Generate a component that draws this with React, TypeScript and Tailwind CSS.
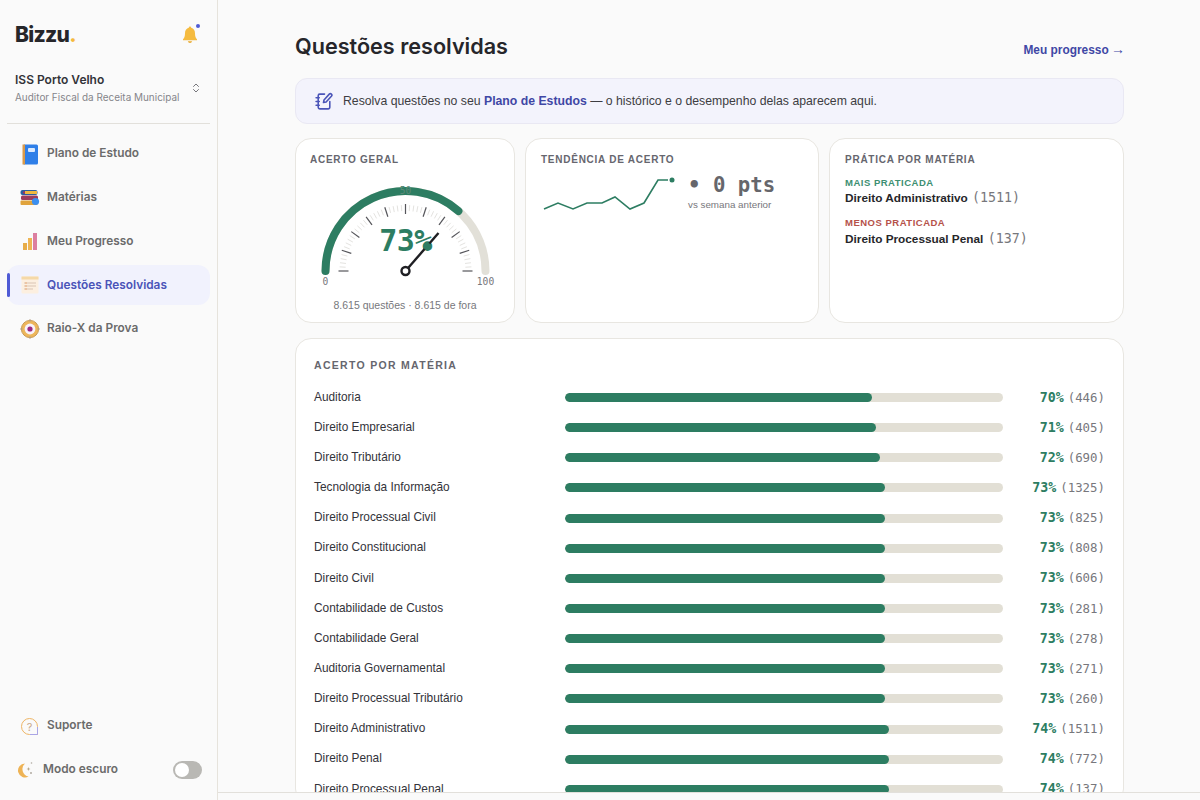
import { ChevronsUpDown } from "lucide-react";

const sans = "font-['Inter',sans-serif]";
const arial = "font-['Liberation_Sans',Arial,sans-serif]";
const mono = "font-['DejaVu_Sans_Mono',monospace]";

const rows: [string, number, number][] = [
  ["Auditoria", 70, 446],
  ["Direito Empresarial", 71, 405],
  ["Direito Tributário", 72, 690],
  ["Tecnologia da Informação", 73, 1325],
  ["Direito Processual Civil", 73, 825],
  ["Direito Constitucional", 73, 808],
  ["Direito Civil", 73, 606],
  ["Contabilidade de Custos", 73, 281],
  ["Contabilidade Geral", 73, 278],
  ["Auditoria Governamental", 73, 271],
  ["Direito Processual Tributário", 73, 260],
  ["Direito Administrativo", 74, 1511],
  ["Direito Penal", 74, 772],
  ["Direito Processual Penal", 74, 137],
];

function BookIcon() {
  return (
    <svg width="16" height="21" viewBox="0 0 16 21">
      <rect x="1" y="0.5" width="15" height="20" rx="1.5" fill="#2f7fe8" />
      <rect x="0.5" y="0.5" width="2.5" height="20" fill="#d99a4a" />
      <rect x="6" y="4" width="7" height="4" rx="1" fill="#dbeafe" />
    </svg>
  );
}

function BooksIcon() {
  return (
    <svg width="20" height="18" viewBox="0 0 20 18">
      <rect x="0.5" y="1" width="17" height="5" rx="2" fill="#2c5f9e" />
      <rect x="5" y="2" width="12" height="3" fill="#f0b840" />
      <rect x="3" y="2.5" width="2" height="2" fill="#a8325a" />
      <rect x="1" y="6.5" width="17" height="4.5" rx="1.5" fill="#9c3d5c" />
      <rect x="0.5" y="11.5" width="17" height="4.5" rx="1" fill="#e0a33c" />
      <circle cx="15.5" cy="12.5" r="3.6" fill="#3b8ff0" />
    </svg>
  );
}

function BarsIcon() {
  return (
    <svg width="16" height="17" viewBox="0 0 16 17">
      <rect x="1" y="10" width="4" height="7" fill="#e7ac48" />
      <rect x="6" y="5" width="4" height="12" fill="#eeb555" />
      <rect x="11" y="0" width="4" height="17" fill="#dc7fa0" />
    </svg>
  );
}

function ListIcon() {
  return (
    <svg width="18" height="18" viewBox="0 0 18 18">
      <rect x="0.5" y="0.5" width="17" height="17" rx="1" fill="#fcefe0" />
      <rect x="0.5" y="0.5" width="17" height="3" fill="#f5d9a8" />
      <path d="M3 7h12M3 10h12M3 13h9" stroke="#d9c4b4" strokeWidth="1" />
      <path d="M4 7h2M4 10h2M4 13h2" stroke="#eeb07e" strokeWidth="1" />
    </svg>
  );
}

function TargetIcon() {
  return (
    <svg width="20" height="20" viewBox="0 0 20 20">
      <circle cx="10" cy="10" r="8.6" fill="#edb65a" stroke="#c99a55" strokeWidth="1" />
      <circle cx="10" cy="10" r="5.4" fill="#f7f2fb" />
      <circle cx="10" cy="10" r="2.6" fill="#9c2a80" />
      <path d="M10 0v3M10 17v3M0 10h3M17 10h3" stroke="#b9a58a" strokeWidth="1" />
    </svg>
  );
}

function HelpIcon() {
  return (
    <svg width="19" height="19" viewBox="0 0 19 19" fill="none">
      <path d="M17.5 17.5H9.5a8 8 0 1 1 8-8z" stroke="#eeb565" strokeWidth="1" />
      <path d="M17.5 10v7.5H10" stroke="#a9a5e6" strokeWidth="1" />
      <text x="9.5" y="13.5" textAnchor="middle" fontSize="11" fill="#c9a98a" fontFamily="Inter, sans-serif">?</text>
    </svg>
  );
}

function MoonIcon() {
  return (
    <svg width="18" height="18" viewBox="0 0 18 18">
      <path d="M9 2.5a7 7 0 1 0 3.6 13A7.5 7.5 0 0 1 9 2.5z" fill="#eeb355" />
      <circle cx="15.5" cy="2" r="0.8" fill="#b0aaa0" />
      <path d="M12.5 6l.6 1.4 1.4.6-1.4.6-.6 1.4-.6-1.4-1.4-.6 1.4-.6z" fill="#b8a98e" />
      <circle cx="15" cy="12" r="1" fill="#b0aaa0" />
    </svg>
  );
}

function NavItem({ icon, label, active }: { icon: React.ReactNode; label: string; active?: boolean }) {
  return (
    <div
      className={`relative flex h-10 items-center rounded-xl pl-[11.5px] ${active ? "bg-[#f1f2fd]" : ""}`}
    >
      {active && <span className="absolute left-0 top-2 h-6 w-[3px] rounded-sm bg-[#4f5bd5]" />}
      <span className="flex w-[28.5px] justify-center pr-[6.5px]">{icon}</span>
      <span
        className={`text-[11.85px] font-semibold ${active ? "text-[#4a54b8]" : "text-[#6b6b6b]"}`}
      >
        {label}
      </span>
    </div>
  );
}

function Sidebar() {
  return (
    <aside className={`flex h-full w-[218px] shrink-0 flex-col border-r border-[#e6e3dc] bg-[#fafafa] ${sans}`}>
      <div className="flex h-[68px] items-start justify-between pl-[15px] pr-[19px] pt-[23px]">
        <span className="text-[21px] font-extrabold leading-6 tracking-[-0.7px] text-[#26262a]">
          Bizzu<span className="text-[#f5b93d]">.</span>
        </span>
        <span className="relative mt-[3px]">
          <svg width="16" height="18" viewBox="0 0 16 18">
            <path
              d="M8 0.5c-.8 0-1.2.6-1.2 1.3C4.3 2.5 3 4.6 3 7.3c0 3-.7 4.7-2 6v1h14v-1c-1.3-1.3-2-3-2-6 0-2.7-1.3-4.8-3.8-5.5 0-.7-.4-1.3-1.2-1.3z"
              fill="#f5bb3f"
            />
            <path d="M5.8 15.3a2.3 2.3 0 0 0 4.4 0z" fill="#e9a92c" />
          </svg>
          <span className="absolute -right-[2px] -top-[2px] h-1 w-1 rounded-full bg-[#4f5bd5]" />
        </span>
      </div>
      <div className="mx-[7px] flex h-[56px] items-start justify-between border-b border-[#e2e0db] pb-3 pl-2 pr-2">
        <div className="pt-[4px]">
          <p className="text-[12px] font-semibold leading-4 text-[#333338]">ISS Porto Velho</p>
          <p className="mt-[3px] whitespace-nowrap text-[9.95px] leading-3 text-[#85858a]">Auditor Fiscal da Receita Municipal</p>
        </div>
        <ChevronsUpDown size={12} className="mt-[14px] text-[#77777c]" />
      </div>
      <nav className="mt-[10px] flex flex-col gap-[3.8px] pl-[7px] pr-[7px]">
        <NavItem icon={<BookIcon />} label="Plano de Estudo" />
        <NavItem icon={<BooksIcon />} label="Matérias" />
        <NavItem icon={<BarsIcon />} label="Meu Progresso" />
        <NavItem icon={<ListIcon />} label="Questões Resolvidas" active />
        <NavItem icon={<TargetIcon />} label="Raio-X da Prova" />
      </nav>
      <div className="mt-auto pb-[10px] pl-[7px] pr-[15px]">
        <NavItem icon={<HelpIcon />} label="Suporte" />
        <div className="mt-[4px] flex h-10 items-center pl-[9px]">
          <MoonIcon />
          <span className="ml-[9px] text-[11.85px] font-semibold text-[#6b6b6b]">Modo escuro</span>
          <span className="ml-auto flex h-[18px] w-[29px] items-center rounded-full bg-[#b9b8b4] pl-[2px]">
            <span className="h-[14px] w-[14px] rounded-full bg-white" />
          </span>
        </div>
      </div>
    </aside>
  );
}

function Gauge() {
  const cx = 109.5;
  const cy = 132;
  const ticks = [];
  for (let v = 0; v <= 100; v += 2) {
    const a = Math.PI - (v / 100) * Math.PI;
    const major = v % 10 === 0;
    const r1 = major ? 67 : 66;
    const r2 = major ? 57 : 60;
    ticks.push(
      <line
        key={v}
        x1={cx + r1 * Math.cos(a)}
        y1={cy - r1 * Math.sin(a)}
        x2={cx + r2 * Math.cos(a)}
        y2={cy - r2 * Math.sin(a)}
        stroke={major ? "#55555a" : "#e4e3e0"}
        strokeWidth={major ? 1.2 : 1}
      />,
    );
  }
  const r = 80;
  const end = Math.PI - 0.73 * Math.PI;
  const ex = cx + r * Math.cos(end);
  const ey = cy - r * Math.sin(end);
  return (
    <svg width="220" height="160" viewBox="0 0 220 160" className="absolute left-0 top-0">
      <path d={`M${cx - r} ${cy} A${r} ${r} 0 0 1 ${cx + r} ${cy}`} fill="none" stroke="#e2e0d8" strokeWidth="8" strokeLinecap="round" />
      <path d={`M${cx - r} ${cy} A${r} ${r} 0 0 1 ${ex} ${ey}`} fill="none" stroke="#2d7d62" strokeWidth="8" strokeLinecap="round" />
      {ticks}
      <text x={cx} y={cy - 77} textAnchor="middle" fontSize="9.6" fill="#5b8a78" fontFamily="DejaVu Sans Mono, monospace">50</text>
      <text x={cx} y={cy - 20} textAnchor="middle" fontSize="30" fontWeight="700" fill="#2d7d62" fontFamily="DejaVu Sans Mono, monospace" letterSpacing="-0.6">73%</text>
      <line x1={cx} y1={cy} x2={cx + 33} y2={cy - 38} stroke="#1f1f23" strokeWidth="2.4" />
      <circle cx={cx} cy={cy} r="4" fill="#fff" stroke="#1f1f23" strokeWidth="2.4" />
      <circle cx={cx + 21.5} cy={cy - 24.7} r="3.6" fill="#2d7d62" />
      <text x={cx - 80} y={cy + 14} textAnchor="middle" fontSize="9.6" fill="#77777c" fontFamily="DejaVu Sans Mono, monospace">0</text>
      <text x={cx + 80} y={cy + 14} textAnchor="middle" fontSize="9.6" fill="#77777c" fontFamily="DejaVu Sans Mono, monospace">100</text>
    </svg>
  );
}

function Trend() {
  return (
    <svg width="134" height="40" viewBox="0 0 134 40" className="shrink-0">
      <polyline
        points="3,36 17,30 32,36 46,30 61,30 74,24 89,36 103,30 117,7 127,7"
        fill="none"
        stroke="#2d7d62"
        strokeWidth="1.6"
      />
      <circle cx="131" cy="7" r="2.5" fill="#2d7d62" />
    </svg>
  );
}

const cardLabel = `text-[10px] font-semibold uppercase leading-3 tracking-[0.75px] text-[#66666e] ${arial}`;

function App() {
  return (
    <div className="flex h-[800px] w-[1200px] overflow-hidden bg-[#fafafa]">
      <Sidebar />
      <div className="flex min-w-0 flex-1 flex-col">
        <main className={`min-h-0 flex-1 overflow-hidden pl-[77px] pr-[76px] ${arial}`}>
          <div className="flex h-[78px] items-start justify-between pt-[32px]">
            <h1 className={`text-[21.6px] font-semibold leading-7 text-[#26262a] ${sans}`}>Questões resolvidas</h1>
            <a className="-mr-px mt-[9px] text-[11.9px] font-bold leading-4 text-[#3f47a5]">
              Meu progresso <span className="-ml-px text-[14px] font-normal">→</span>
            </a>
          </div>
          <div className="flex h-[46px] items-center rounded-xl border border-[#e9e8f3] bg-[#f3f3fc] pl-[19px] text-[12.25px] text-[#3d3d42]">
            <svg width="18" height="19" viewBox="0 0 17 18" fill="none" stroke="#4a54b8" strokeWidth="1.5" strokeLinecap="round" strokeLinejoin="round">
              <path d="M9 2H4.5A1.5 1.5 0 0 0 3 3.5v11A1.5 1.5 0 0 0 4.5 16h8a1.5 1.5 0 0 0 1.5-1.5V9" />
              <path d="M1 5.5h3M1 9h3M1 12.5h3" />
              <path d="M8 10l.5-2.5 5-5.5a1.4 1.4 0 0 1 2 2l-5 5.5z" />
            </svg>
            <span className="ml-[10px]">
              Resolva questões no seu <b className="font-bold text-[#3f47a5]">Plano de Estudos</b> — o histórico e o desempenho delas aparecem aqui.
            </span>
          </div>
          <div className="mt-[14px] grid h-[185px] grid-cols-[220px_294px_295px] gap-[10px]">
            <section className="relative rounded-2xl border border-[#e8e6e1] bg-white">
              <p className={`${cardLabel} absolute left-[14px] top-[15px]`}>Acerto geral</p>
              <Gauge />
              <p className="absolute inset-x-0 top-[160px] text-center text-[10.5px] leading-3 text-[#77777c]">8.615 questões · 8.615 de fora</p>
            </section>
            <section className="rounded-2xl border border-[#e8e6e1] bg-white px-[15px] pt-[15px]">
              <p className={cardLabel}>Tendência de acerto</p>
              <div className="mt-[7px] flex items-start">
                <Trend />
                <div className="ml-[13px]">
                  <p className={`whitespace-nowrap text-[20.7px] font-bold leading-6 text-[#66666b] ${mono}`}>• 0 pts</p>
                  <p className="mt-[2px] text-[9.8px] leading-3 text-[#77777c]">vs semana anterior</p>
                </div>
              </div>
            </section>
            <section className="rounded-2xl border border-[#e8e6e1] bg-white px-[15px] pt-[15px]">
              <p className={cardLabel}>Prática por matéria</p>
              <p className="mt-[11px] text-[9.5px] font-bold uppercase leading-3 tracking-[0.5px] text-[#3d8f72]">Mais praticada</p>
              <p className="mt-px text-[11.8px] font-bold leading-4 text-[#26262a]">
                Direito Administrativo <span className={`ml-[1px] text-[13.3px] font-normal text-[#77777c] ${mono}`}>(1511)</span>
              </p>
              <p className="mt-[11px] text-[9.5px] font-bold uppercase leading-3 tracking-[0.5px] text-[#b5524a]">Menos praticada</p>
              <p className="mt-[2px] text-[11.8px] font-bold leading-4 text-[#26262a]">
                Direito Processual Penal <span className={`ml-[1px] text-[13.3px] font-normal text-[#77777c] ${mono}`}>(137)</span>
              </p>
            </section>
          </div>
          <section className="mt-[14.5px] rounded-2xl border border-[#e8e6e1] bg-white px-[18px] pt-5">
            <p className="text-[10.5px] font-semibold uppercase leading-3 tracking-[1.3px] text-[#66666e]">Acerto por matéria</p>
            <div className="mt-[12px] flex flex-col">
              {rows.map(([name, pct, count]) => (
                <div key={name} className="flex h-[30.15px] items-center">
                  <span className="w-[251px] shrink-0 text-[11.85px] text-[#33333a]">{name}</span>
                  <div className="h-[9px] w-[438px] shrink-0 overflow-hidden rounded-full bg-[#e2dfd5]">
                    <div className="h-full rounded-full bg-[#2d7d62]" style={{ width: `${pct}%` }} />
                  </div>
                  <span className={`ml-auto flex items-baseline whitespace-nowrap ${mono}`}>
                    <b className="text-[13.3px] font-bold text-[#2d7d62]">{pct}%</b>
                    <span className="ml-[4px] text-[12.4px] text-[#77777c]">({count})</span>
                  </span>
                </div>
              ))}
            </div>
          </section>
        </main>
        <div className="h-2 shrink-0 border-t border-[#e2e0db] bg-[#fafafa]" />
      </div>
    </div>
  );
}

export default App;
